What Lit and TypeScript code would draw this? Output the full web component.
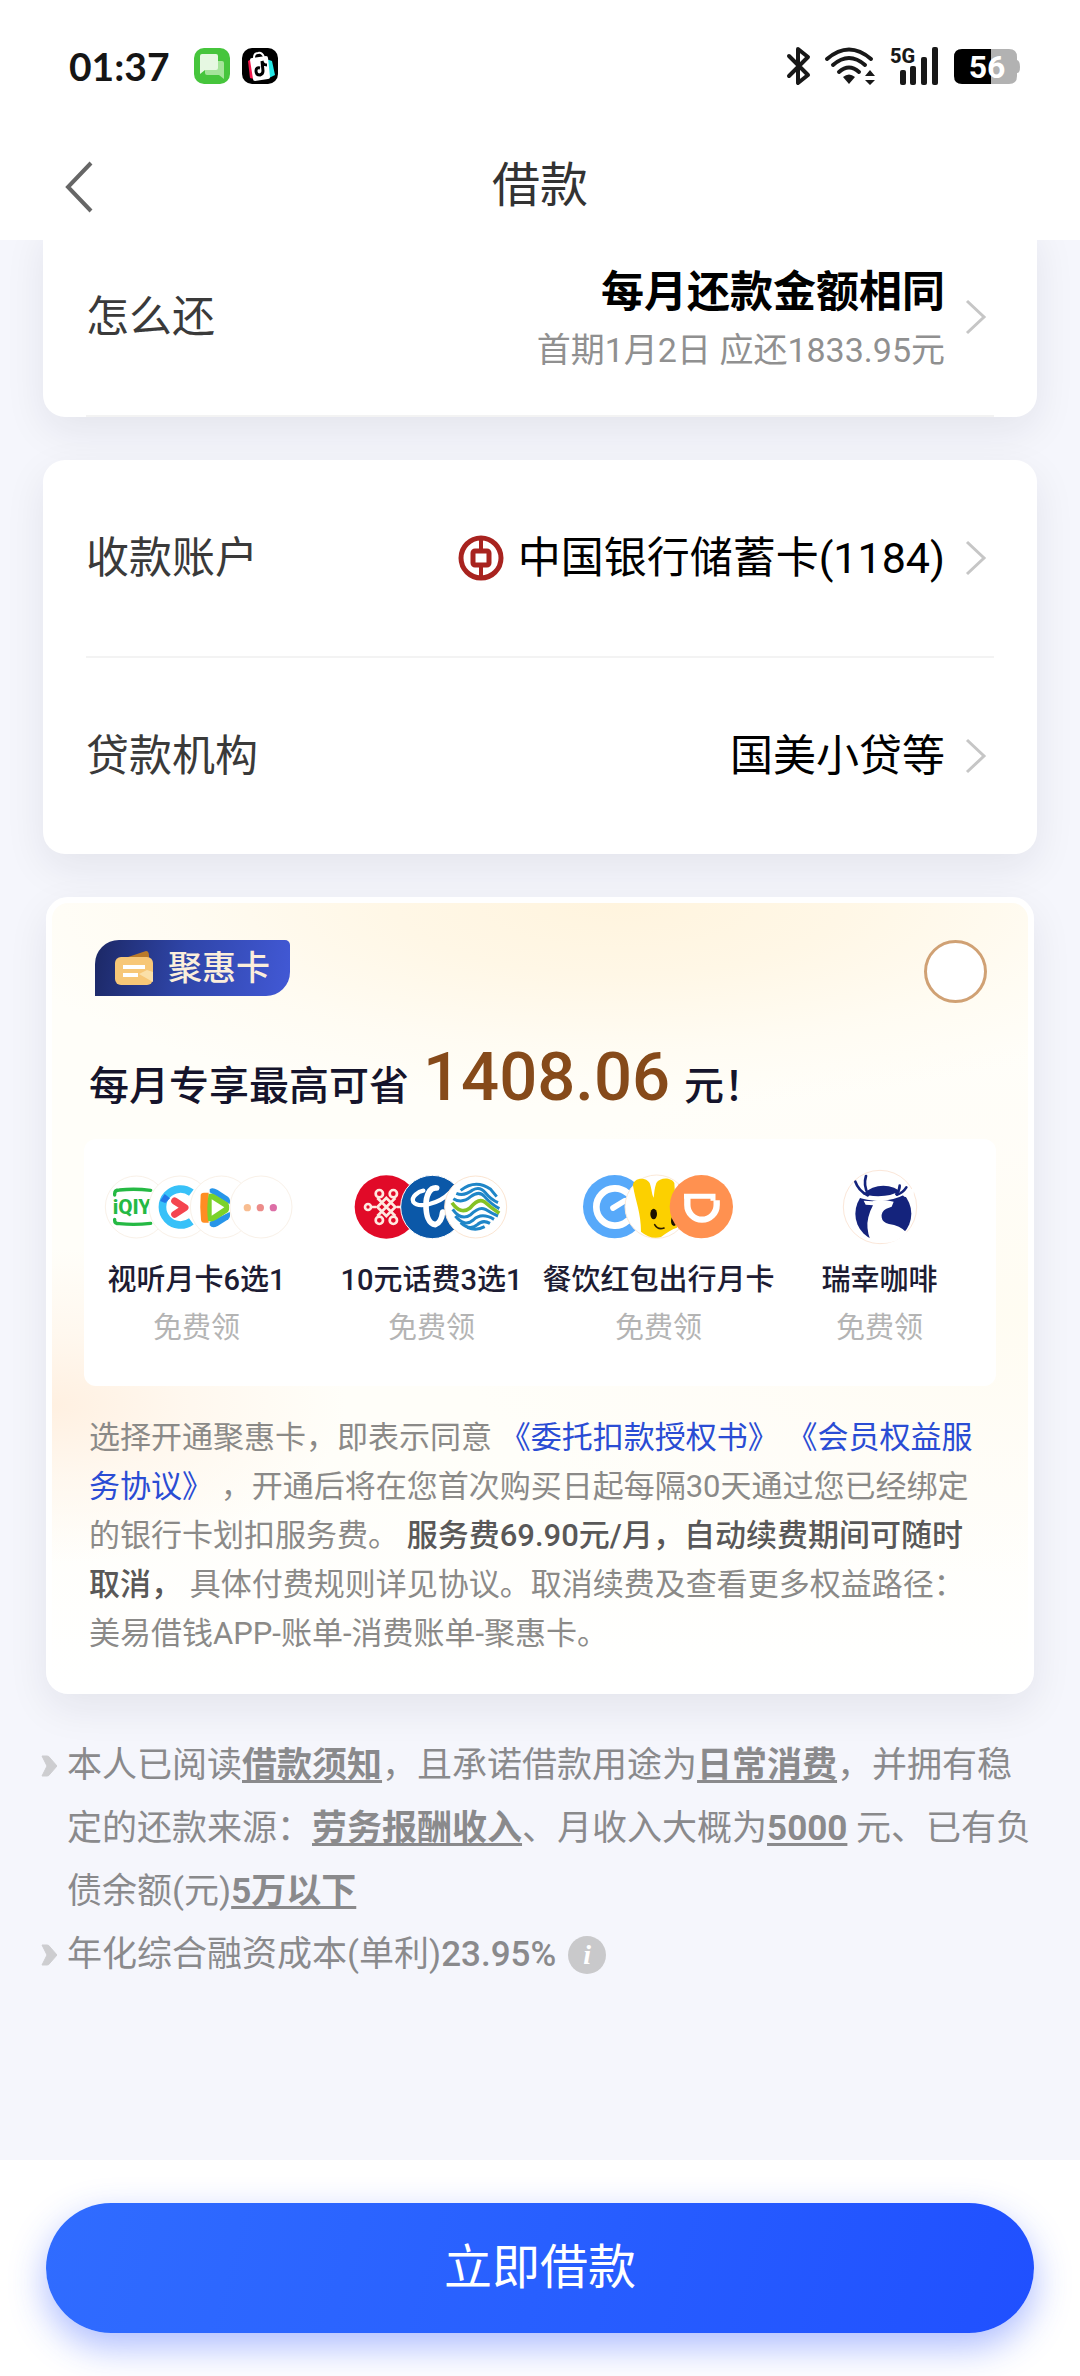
import { LitElement, html, css } from "lit";
import { customElement, property, state } from "lit/decorators.js";

/* ---------- brand marks ---------- */

const videoLogos = html`<svg width="192" height="66" viewBox="63 132 576 198" aria-hidden="true">
  <circle cx="169" cy="231" r="93" fill="#fff" stroke="#f9f1e8" stroke-width="3" />
  <g fill="none" stroke="#25b944" stroke-width="10" stroke-linecap="round">
    <path d="M104 195v-4q0-11 14-11q46-5 94 1" />
    <path d="M104 268v4q0 9 14 9q46 5 94-1" />
  </g>
  <text x="98" y="253" font-family="Roboto, sans-serif" font-weight="800" font-size="62" fill="#25b944">iQIY</text>
  <circle cx="300" cy="231" r="93" fill="#fff" stroke="#f9f1e8" stroke-width="3" />
  <path d="M334 188A54 54 0 1 0 334 274" fill="none" stroke="#38c1f8" stroke-width="23" />
  <path d="M240 213l14-21 16 13-14 14z" fill="#2277e8" />
  <path d="M284 213l31 20-31 20" fill="none" stroke="#f4454f" stroke-width="21" stroke-linecap="round" stroke-linejoin="round" />
  <circle cx="424" cy="231" r="93" fill="#fff" stroke="#f9f1e8" stroke-width="3" />
  <path d="M389 178q8-8 24 2l32 21q8 8 4 22l-60-36z" fill="#2795e9" />
  <path d="M389 286q8 11 24 2l32-20q8-8 4-22l-60 30z" fill="#2795e9" />
  <path d="M362 196q0-8 10-8h14v90h-14q-8 0-9-9q-4-36-1-73z" fill="#ff8d23" />
  <path d="M386 192q10-5 24 5l34 21q8 14 0 28l-36 23q-14 9-24 3q-5-42 2-80z" fill="#7bd22a" />
  <path d="M395 208l38 24-38 25z" fill="#fff" />
  <circle cx="543" cy="231" r="93" fill="#fff" stroke="#f9f1e8" stroke-width="3" />
  <circle cx="502" cy="233" r="11" fill="#f8bd91" />
  <circle cx="541" cy="233" r="11" fill="#ec8b89" />
  <circle cx="580" cy="233" r="11" fill="#dc6ea6" />
</svg>`;

const carrierLogos = html`<svg width="158" height="66" viewBox="824 132 474 198" aria-hidden="true">
  <circle cx="927" cy="231" r="95" fill="#e10a28" />
  <g fill="none" stroke="#ffe9e0" stroke-width="8">
    <path d="M900 204l54 54M954 204l-54 54M880 231h16M974 231h-16M927 204l27 27-27 27-27-27z" />
    <circle cx="872" cy="231" r="9" />
    <circle cx="906" cy="191" r="11" />
    <circle cx="948" cy="191" r="11" />
    <circle cx="906" cy="271" r="11" />
    <circle cx="948" cy="271" r="11" />
    <circle cx="982" cy="231" r="9" />
  </g>
  <circle cx="1065" cy="231" r="95" fill="#0b58a8" stroke="#fff" stroke-width="3" />
  <path d="M1120 186C1080 226 1022 234 1008 216C1000 200 1024 184 1038 182" fill="none" stroke="#fff" stroke-width="13" stroke-linecap="round" />
  <path d="M1078 174C1056 172 1046 198 1046 226C1046 256 1054 282 1074 284C1086 280 1094 264 1096 246" fill="none" stroke="#fff" stroke-width="17" stroke-linecap="round" />
  <circle cx="1195" cy="231" r="93" fill="#fff" stroke="#fbe5d2" stroke-width="3" />
  <g fill="none" stroke="#1f86c8" stroke-width="9">
    <path d="M1150 181Q1195 146 1240 178L1258 200" />
    <path d="M1137 190Q1160 200 1186 180Q1208 168 1224 188Q1240 208 1262 218" />
    <path d="M1128 206Q1154 222 1180 200Q1206 180 1222 200Q1240 222 1266 236" />
    <path d="M1126 238Q1152 274 1180 254Q1206 228 1224 238Q1242 250 1262 258" />
    <path d="M1134 258Q1162 292 1188 270Q1212 246 1250 268" />
    <path d="M1150 278Q1178 304 1200 284Q1216 268 1238 280" />
    <path d="M1170 292Q1196 304 1222 290" />
  </g>
  <path d="M1124 218Q1150 256 1178 234Q1204 202 1222 216Q1242 234 1266 250" fill="none" stroke="#84c225" stroke-width="11" />
</svg>`;

const lifeLogos = html`<svg width="156" height="66" viewBox="129 129 468 198" aria-hidden="true">
  <circle cx="233" cy="227" r="95" fill="#57a9fa" />
  <path d="M271 186A56 56 0 1 0 271 270" fill="none" stroke="#fff" stroke-width="20" stroke-linecap="round" />
  <path d="M228 231l36-22" stroke="#fff" stroke-width="17" stroke-linecap="round" />
  <circle cx="359" cy="227" r="95" fill="#fff" stroke="#fbe9d8" stroke-width="3" />
  <path d="M288 164C286 142 326 134 338 156C344 172 344 190 350 200C352 186 352 172 358 156C368 138 404 138 412 156L420 290Q400 296 372 318Q340 326 312 302C312 244 296 212 288 164Z" fill="#fcd000" />
  <ellipse cx="350" cy="249" rx="10" ry="16" fill="#1c1200" />
  <ellipse cx="411" cy="270" rx="9" ry="15" fill="#1c1200" />
  <path d="M353 281q10 17 28 10" fill="none" stroke="#2a1c00" stroke-width="5" stroke-linecap="round" />
  <circle cx="493" cy="227" r="95" fill="#ff9150" />
  <path d="M441 196H528V209" fill="none" stroke="#fff" stroke-width="15" />
  <path d="M451 190V222A44 44 0 0 0 539 222V208" fill="none" stroke="#fff" stroke-width="19" />
</svg>`;

const coffeeLogo = html`<svg width="76" height="76" viewBox="913 113 228 228" aria-hidden="true">
  <circle cx="1027" cy="227" r="110" fill="#fff" stroke="#fbe7d9" stroke-width="3" />
  <circle cx="1037" cy="247" r="84" fill="#14237c" />
  <path d="M958 190Q1034 218 1104 180" fill="none" stroke="#fff" stroke-width="14" />
  <path d="M1088 184L1130 170L1126 200L1100 196Z" fill="#fff" />
  <path d="M978 208L1004 210Q1034 202 1068 211L1062 226L1046 232Q1030 240 1032 258Q1034 274 1054 278Q1086 282 1108 304Q1082 335 1030 335Q1004 334 998 326Q984 290 992 258Q998 236 1006 222L984 220Z" fill="#fff" />
  <g fill="none" stroke="#14237c" stroke-width="8" stroke-linecap="round">
    <path d="M953 151Q962 178 990 192" />
    <path d="M985 134Q976 162 992 190" />
    <path d="M1106 168Q1096 184 1078 190" />
    <path d="M1086 163Q1086 176 1076 188" />
  </g>
</svg>`;

const bankLogo = html`<svg width="46" height="46" viewBox="0 0 46 46" aria-hidden="true">
  <circle cx="23" cy="23" r="20" fill="none" stroke="#a8231f" stroke-width="5" />
  <rect x="15" y="16" width="16" height="14" rx="2" fill="none" stroke="#a8231f" stroke-width="5" />
  <path d="M23 3v12M23 31v12" stroke="#a8231f" stroke-width="4" />
</svg>`;

/* ---------- elements ---------- */

@customElement("status-bar")
export class StatusBar extends LitElement {
  static styles = css`
    :host {
      display: flex;
      align-items: center;
      justify-content: space-between;
      height: 132px;
      padding: 0 60px 0 69px;
    }
    svg {
      overflow: visible;
    }
    .side {
      display: flex;
      align-items: center;
      gap: 12px;
    }
    .time {
      margin-right: 12px;
      color: #151515;
      font: 700 39px/48px Lato, "Noto Sans", sans-serif;
    }
    .right {
      gap: 15px;
    }
  `;

  render() {
    return html`
      <div class="side">
        <span class="time">01:37</span>
        <svg width="36" height="36" viewBox="0 0 36 36" aria-hidden="true">
          <rect width="36" height="36" rx="10" fill="#46c53c" />
          <path d="M13 13h15a2 2 0 0 1 2 2v16l-5-4H13a2 2 0 0 1-2-2V15z" fill="#a5e49a" />
          <path d="M8 6h14a2 2 0 0 1 2 2v12a2 2 0 0 1-2 2H11l-5 4V8a2 2 0 0 1 2-2z" fill="#e6f8e2" />
        </svg>
        <svg width="36" height="36" viewBox="0 0 36 36" aria-hidden="true">
          <rect width="36" height="36" rx="10" fill="#000" />
          <path d="M6 13l7-4-1 22-4-1z" fill="#f5184c" />
          <path d="M24 11l6 2 3 14-8 4z" fill="#25e8e6" />
          <path d="M12 10q0-5 4-5q4-1 6 4" fill="none" stroke="#fff" stroke-width="2" />
          <path d="M8 12q0-2 2-2l14-2q2 0 2 2l2 19q0 2-2 2l-13 2q-2 0-2-2z" fill="#fff" />
          <path d="M18 20q-4-1-4 3q0 4 4 4q3-1 3-4l-1-10q1 4 5 4" fill="none" stroke="#000" stroke-width="3" />
        </svg>
      </div>
      <div class="side right">
        <svg width="24" height="38" viewBox="0 0 24 38" aria-label="蓝牙">
          <path d="M2 9l19 19-10 8V2l10 8L2 29" fill="none" stroke="#181818" stroke-width="4" stroke-linejoin="round" stroke-linecap="round" />
        </svg>
        <svg width="49" height="38" viewBox="1 0 49 38" aria-label="无线网络">
          <g fill="none" stroke="#181818" stroke-width="4" stroke-linecap="round">
            <path d="M2 12Q24-7 46 12" />
            <path d="M8 18Q24 4 40 18" />
            <path d="M14 25Q24 16 34 25" />
          </g>
          <path d="M18 30q6-5 12 0l-6 7z" fill="#181818" />
          <path d="M40 29l5-6 5 6zM40 33h10l-5 5z" fill="#181818" />
        </svg>
        <svg width="49" height="38" viewBox="0 0 49 38" aria-label="移动信号">
          <text x="0" y="16" font-family="Roboto, sans-serif" font-weight="800" font-size="20" fill="#181818">5G</text>
          <g fill="#181818">
            <rect x="10" y="23" width="6" height="15" rx="2" />
            <rect x="20" y="19" width="6" height="19" rx="2" />
            <rect x="31" y="10" width="6" height="28" rx="2" />
            <rect x="42" y="0" width="6" height="38" rx="2" />
          </g>
        </svg>
        <svg width="66" height="36" viewBox="0 0 66 36" aria-label="电量">
          <path d="M8 1h30v35H8q-8 0-8-8V9q0-8 8-8z" fill="#000" />
          <path d="M37 1h18q8 0 8 8v3q3 1 3 7t-3 6v3q0 8-8 8H37z" fill="#b2b2b2" />
          <text x="33" y="30" text-anchor="middle" font-family="Roboto, sans-serif" font-weight="700" font-size="32" fill="#fff">56</text>
        </svg>
      </div>
    `;
  }
}

@customElement("info-row")
export class InfoRow extends LitElement {
  @property() label = "";

  static styles = css`
    :host {
      display: block;
    }
    .row {
      display: flex;
      align-items: center;
      justify-content: space-between;
      width: 100%;
      height: 196px;
      padding: 0 7px 0 0;
      border: 0;
      background: none;
      color: #000;
      font: 400 43px/60px Roboto, "Noto Sans CJK SC", sans-serif;
      text-align: left;
    }
    .label {
      color: #3a3a3a;
    }
    .value {
      display: flex;
      align-items: center;
      gap: 20px;
    }
    .content {
      display: flex;
      align-items: center;
      gap: 14px;
    }
  `;

  render() {
    return html`<button class="row" type="button">
      <span class="label">${this.label}</span>
      <span class="value">
        <span class="content"><slot></slot></span>
        <svg width="22" height="36" viewBox="0 0 22 36" aria-hidden="true">
          <path d="M2 2l17 16L2 34" fill="none" stroke="#c6c6c6" stroke-width="3" />
        </svg>
      </span>
    </button>`;
  }
}

interface Benefit {
  name: string;
  logo: unknown;
}

const benefits: Benefit[] = [
  { name: "视听月卡6选1", logo: videoLogos },
  { name: "10元话费3选1", logo: carrierLogos },
  { name: "餐饮红包出行月卡", logo: lifeLogos },
  { name: "瑞幸咖啡", logo: coffeeLogo },
];

@customElement("member-card")
export class MemberCard extends LitElement {
  @state() private joined = false;

  static styles = css`
    :host {
      display: block;
      box-sizing: border-box;
      padding: 37px 0 30px;
      border: 6px solid #fff;
      border-radius: 22px;
      background:
        radial-gradient(ellipse 66% 26% at 58% 0, #fff4de 0%, #fff7e6 35%, rgba(255, 250, 238, 0.6) 70%, rgba(255, 253, 248, 0) 100%),
        radial-gradient(ellipse 30% 20% at 0 64%, #fff0e1 0%, rgba(255, 245, 234, 0.7) 45%, rgba(255, 252, 248, 0) 100%),
        radial-gradient(ellipse 60% 34% at 100% 52%, #fffcf2 0%, rgba(255, 252, 246, 0.6) 60%, rgba(255, 254, 252, 0) 100%),
        linear-gradient(#fffef9 70%, #fff);
      box-shadow: 0 14px 40px rgba(30, 30, 50, 0.08);
    }
    .top {
      display: flex;
      justify-content: space-between;
      align-items: flex-start;
      padding: 0 41px 0 43px;
    }
    .badge {
      display: flex;
      align-items: center;
      gap: 15px;
      padding: 0 20px;
      border-radius: 24px 5px 24px 0;
      background: linear-gradient(100deg, #1c2865, #2f45a8 45%, #4259d6);
      color: #fbeedb;
      font-size: 34px;
      font-weight: 500;
      line-height: 56px;
    }
    .check {
      appearance: none;
      width: 63px;
      height: 63px;
      margin: 0;
      border: 3px solid #d0a174;
      border-radius: 50%;
      background: #fff;
    }
    .check:checked {
      background: #d0a174;
      box-shadow: inset 0 0 0 12px #fff;
    }
    .headline {
      display: flex;
      align-items: baseline;
      gap: 14px;
      height: 80px;
      margin: 34px 0 22px;
      padding: 0 37px;
      color: #15142b;
      font-size: 40px;
      font-weight: 500;
      line-height: 80px;
    }
    .amount {
      color: #864a1a;
      font-size: 67px;
    }
    .panel {
      display: grid;
      grid-template-columns: minmax(0, 226fr) minmax(0, 246fr) minmax(0, 210fr) minmax(0, 234fr);
      margin: 0 32px;
      padding: 30px 0 36px;
      border-radius: 12px;
      background: #fff;
    }
    .item {
      display: flex;
      flex-direction: column;
      align-items: center;
      white-space: nowrap;
    }
    .logos {
      display: flex;
      align-items: center;
      height: 76px;
      margin-bottom: 13px;
    }
    .name {
      margin-bottom: 4px;
      color: #1d1c33;
      font-size: 29px;
      font-weight: 500;
      line-height: 44px;
    }
    .free {
      color: #b4b4b4;
      font-size: 29px;
      line-height: 44px;
    }
    .terms {
      margin: 27px 36px 0 37px;
      color: #8b8a88;
      font-size: 31px;
      line-height: 49px;
    }
    .terms a {
      color: #2a4cd4;
      text-decoration: none;
    }
    .terms strong {
      color: #595858;
      font-weight: 500;
    }
  `;

  render() {
    return html`
      <div class="top">
        <span class="badge">
          <svg width="38" height="36" viewBox="0 0 38 36" aria-hidden="true">
            <path d="M7 9L31 1q3 0 3 5v6H7z" fill="#b97a2b" />
            <rect x="0" y="7" width="38" height="28" rx="6" fill="#f7c777" />
            <path d="M24 24l14 8v-10l-6-2z" fill="#fbe0a8" />
            <path d="M8 17h22M8 25h15" stroke="#fff" stroke-width="4" />
          </svg>
          聚惠卡
        </span>
        <input
          class="check"
          type="checkbox"
          aria-label="开通聚惠卡"
          .checked=${this.joined}
          @change=${(e: Event) => (this.joined = (e.target as HTMLInputElement).checked)}
        />
      </div>
      <div class="headline">
        <span>每月专享最高可省</span><span class="amount">1408.06</span><span>元！</span>
      </div>
      <div class="panel" role="list">
        ${benefits.map(
          (b) => html`<div class="item" role="listitem">
            <span class="logos">${b.logo}</span>
            <span class="name">${b.name}</span>
            <span class="free">免费领</span>
          </div>`,
        )}
      </div>
      <div class="terms">
        选择开通聚惠卡，即表示同意 <a href="#authorization">《委托扣款授权书》</a> <a href="#membership">《会员权益服务协议》</a>
        ，开通后将在您首次购买日起每隔30天通过您已经绑定的银行卡划扣服务费。
        <strong>服务费69.90元/月，自动续费期间可随时取消，</strong>
        具体付费规则详见协议。取消续费及查看更多权益路径：美易借钱APP-账单-消费账单-聚惠卡。
      </div>
    `;
  }
}

@customElement("app-root")
export class AppRoot extends LitElement {
  static styles = css`
    :host {
      display: flex;
      flex-direction: column;
      min-height: 100vh;
      background: #f5f6fc;
      color: #000;
      font-family: Roboto, "Noto Sans CJK SC", sans-serif;
    }
    .head {
      background: #fff;
    }
    .nav {
      display: grid;
      grid-template-columns: 1fr auto 1fr;
      align-items: center;
      height: 108px;
      padding: 0 63px;
    }
    .back {
      width: 32px;
      height: 56px;
      padding: 0;
      border: 0;
      background: none;
    }
    .title {
      margin: 0;
      color: #333;
      font-size: 48px;
      font-weight: 400;
      line-height: 68px;
    }
    .main {
      flex: 1;
      overflow: hidden;
    }
    .card {
      margin: 0 43px 43px;
      padding: 0 43px;
      border-radius: 22px;
      background: #fff;
      box-shadow: 0 14px 40px rgba(30, 30, 50, 0.08);
    }
    .scrolled {
      margin-top: -21px;
    }
    .line {
      border-bottom: 2px solid #f3f3f3;
    }
    .plan {
      display: flex;
      flex-direction: column;
      align-items: flex-end;
      padding-top: 6px;
    }
    .plan strong {
      font-weight: 700;
    }
    .sub {
      color: #909090;
      font-size: 34px;
      line-height: 56px;
    }
    .member {
      margin: 0 46px;
    }
    .notes {
      margin: 40px 46px 0 41px;
      padding: 0;
      list-style: none;
      color: #8a8a8c;
      font-size: 35px;
      line-height: 63px;
    }
    .note {
      display: flex;
      gap: 10px;
    }
    .mark {
      flex: none;
      height: 63px;
    }
    .note a {
      color: inherit;
      font-weight: 700;
      text-decoration: underline;
      text-decoration-thickness: 3px;
      text-decoration-skip-ink: none;
      text-underline-offset: 3px;
    }
    .rate {
      display: flex;
      align-items: center;
    }
    .rate strong {
      font-weight: 500;
    }
    .info {
      width: 38px;
      height: 38px;
      margin-left: 12px;
      padding: 0;
      border: 0;
      border-radius: 50%;
      background: #c9c9cb;
      color: #fff;
      font: italic 700 28px/38px "Liberation Serif", serif;
      text-align: center;
    }
    .foot {
      padding: 43px 46px;
      background: #fff;
    }
    .submit {
      display: block;
      width: 100%;
      height: 130px;
      border: 0;
      border-radius: 65px;
      background: linear-gradient(105deg, #306cff, #285fff 50%, #2050ff);
      box-shadow: 0 14px 36px rgba(40, 80, 255, 0.38);
      color: #fff;
      font: 400 48px/70px Roboto, "Noto Sans CJK SC", sans-serif;
    }
  `;

  render() {
    const mark = html`<svg class="mark" width="16" viewBox="0 0 16 63" aria-hidden="true">
      <path d="M1 22h5q2 0 3 2l7 8-7 8q-1 2-3 2H1l5-10z" fill="#cdcdd0" stroke="#cdcdd0" stroke-width="1" stroke-linejoin="round" />
    </svg>`;
    return html`
      <header class="head">
        <status-bar></status-bar>
        <nav class="nav">
          <button class="back" type="button" aria-label="返回">
            <svg width="32" height="56" viewBox="0 0 32 56" aria-hidden="true">
              <path d="M28 5L5 29l23 24" fill="none" stroke="#666" stroke-width="4" />
            </svg>
          </button>
          <h1 class="title">借款</h1>
        </nav>
      </header>
      <main class="main">
        <section class="card scrolled">
          <info-row class="line" label="怎么还">
            <span class="plan"><strong>每月还款金额相同</strong><span class="sub">首期1月2日 应还1833.95元</span></span>
          </info-row>
        </section>
        <section class="card">
          <info-row class="line" label="收款账户">${bankLogo}<span>中国银行储蓄卡(1184)</span></info-row>
          <info-row label="贷款机构">国美小贷等</info-row>
        </section>
        <member-card class="member"></member-card>
        <ul class="notes">
          <li class="note">
            ${mark}
            <span
              >本人已阅读<a href="#notice">借款须知</a>，且承诺借款用途为<a href="#purpose">日常消费</a>，并拥有稳定的还款来源：<a
                href="#income-source"
                >劳务报酬收入</a
              >、月收入大概为<a href="#income">5000</a> 元、已有负债余额(元)<a href="#debt">5万以下</a></span
            >
          </li>
          <li class="note">
            ${mark}
            <span class="rate"
              >年化综合融资成本(单利)<strong>23.95%</strong><button class="info" type="button" aria-label="说明">i</button></span
            >
          </li>
        </ul>
      </main>
      <footer class="foot">
        <button class="submit" type="button">立即借款</button>
      </footer>
    `;
  }
}
